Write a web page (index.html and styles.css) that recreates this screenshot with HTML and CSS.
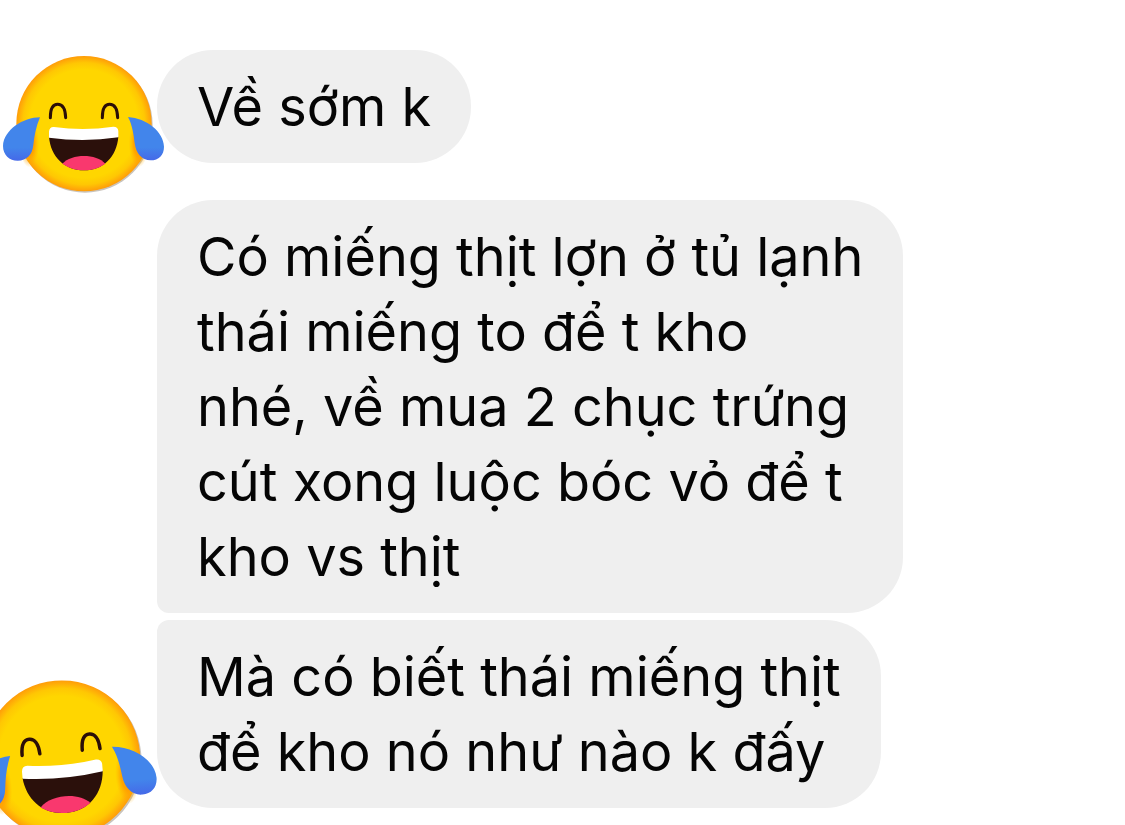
FILE: index.html
```html
<!DOCTYPE html>
<html lang="vi">
	<head>
		<meta charset="UTF-8">
		<meta name="viewport" content="width=device-width, initial-scale=1">
		<title>Tin nhắn</title>
		<link rel="stylesheet" href="styles.css">
	</head>
	<body>
		<svg class="defs" aria-hidden="true">
			<defs>
				<radialGradient id="face">
					<stop offset="0.8" stop-color="#ffd600"/>
					<stop offset="0.9" stop-color="#ffc703"/>
					<stop offset="1" stop-color="#ff9c0a"/>
				</radialGradient>
				<linearGradient id="tear" x1="0" y1="0" x2="0" y2="1">
					<stop offset="0.7" stop-color="#4285eb"/>
					<stop offset="1" stop-color="#4569e8"/>
				</linearGradient>
				<radialGradient id="cheek">
					<stop offset="0.5" stop-color="#ff9800" stop-opacity="0.8"/>
					<stop offset="1" stop-color="#ffb300" stop-opacity="0"/>
				</radialGradient>
			</defs>
			<symbol id="joy" viewBox="0 0 540 495">
				<circle cx="255" cy="255" r="203" fill="#c9c4bd"/>
				<circle cx="252" cy="251" r="203" fill="url(#face)"/>
				<ellipse cx="88" cy="310" rx="30" ry="72" fill="url(#cheek)"/>
				<ellipse cx="416" cy="310" rx="30" ry="72" fill="url(#cheek)"/>
				<path d="M151 233C151 206 160 193 173 193S196 206 197 233M307 233C307 206 316 193 329 193S352 206 353 233" fill="none" stroke="#2b0e08" stroke-width="9" stroke-linecap="round"/>
				<path d="M147 291Q252 304 355 290C350 350 310 391 252 391S152 350 147 291Z" fill="#2b100b"/>
				<path d="M187 371C215 340 289 340 316 371Q288 391 252 391T187 371Z" fill="#f9386e"/>
				<path d="M147 293L147 275Q148 260 162 261Q252 273 340 260Q355 260 355 274L355 292Q252 307 147 293Z" fill="#fff"/>
				<path d="M120 232C70 232 11 270 9 318C9 345 28 362 53 362C80 362 97 345 100 315C103 288 108 260 120 232Z" fill="url(#tear)"/>
				<path d="M384 231C440 235 491 275 492 320C492 345 476 361 452 361C425 361 408 340 404 310C401 285 397 255 384 231Z" fill="url(#tear)"/>
			</symbol>
		</svg>
		<main class="chat">
			<div class="message">
				<p class="bubble">Về sớm k</p>
				<svg class="avatar" role="img" aria-label="Cười ra nước mắt"><use href="#joy"/></svg>
			</div>
			<div class="group">
				<div class="message">
					<p class="bubble first">Có miếng thịt lợn ở tủ lạnh<br>thái miếng to để t kho<br>nhé, về mua 2 chục trứng<br>cút xong luộc bóc vỏ để t<br>kho vs thịt</p>
				</div>
				<div class="message">
					<p class="bubble last">Mà có biết thái miếng thịt<br>để kho nó như nào k đấy</p>
					<svg class="avatar tilted" role="img" aria-label="Cười ra nước mắt"><use href="#joy"/></svg>
				</div>
			</div>
		</main>
	</body>
</html>
```

FILE: styles.css
```css
body {
	margin: 0;
	background: #fff;
	color: #050505;
	font-family: Inter, "Liberation Sans", sans-serif;
	font-size: 54px;
	line-height: 75px;
}
.defs {
	position: absolute;
	width: 0;
	height: 0;
}
.chat {
	display: flex;
	flex-direction: column;
	gap: 37px;
	box-sizing: border-box;
	min-height: 100vh;
	padding: 50px 16px 17px 157px;
	overflow: hidden;
}
.group {
	display: flex;
	flex-direction: column;
	gap: 7px;
}
.message {
	display: flex;
	position: relative;
}
.bubble {
	margin: 0;
	padding: 19px 40px;
	border-radius: 56px;
	background: #efefef;
}
.first {
	border-bottom-left-radius: 12px;
}
.last {
	border-top-left-radius: 12px;
}
/* emoji hangs over the left edge of the bubble */
.avatar {
	position: absolute;
	top: -10px;
	left: -157px;
	width: 180px;
	height: 165px;
}
.tilted {
	top: 41px;
	left: -193px;
	width: 209px;
	height: 192px;
	transform: rotate(-5deg);
}
```
